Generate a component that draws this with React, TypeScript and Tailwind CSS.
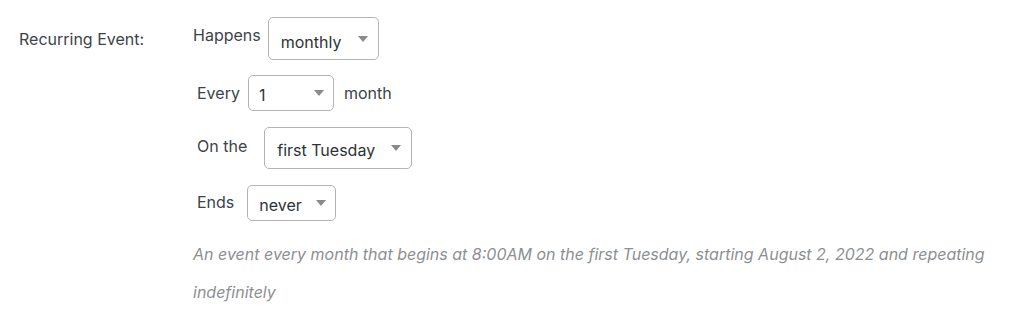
import React from "react";

function Arrow() {
  return (
    <svg width="10" height="6" viewBox="0 0 10 6" className="shrink-0">
      <path d="M0 0 L10 0 L5 6 Z" fill="#8a8a8a" />
    </svg>
  );
}

export default function App() {
  return (
    <div
      className="min-h-[314px] w-[1024px] bg-white"
      style={{ fontFamily: "Inter, 'Noto Sans', sans-serif" }}
    >
      <div className="flex pt-[17px]">
        <div className="w-[193px] shrink-0 pl-[19px] pt-[10px] text-[16px] leading-[24px] text-[#3c434a]">
          Recurring Event:
        </div>
        <div className="flex flex-col">
          <div className="flex items-start">
            <span className="pt-[6px] text-[16px] leading-[24px] text-[#3c434a]">Happens</span>
            <div className="ml-[7px]">
              <div className="flex h-[43px] w-[111px] items-center justify-between rounded-[5px] border border-[#b4b4b4] bg-white pl-[12px] pr-[10px]">
                <span className="pt-[6px] text-[16px] text-[#2c3338]">monthly</span>
                <Arrow />
              </div>
            </div>
          </div>
          <div className="mt-[15px] flex items-center pl-[4px]">
            <span className="text-[16px] leading-[24px] text-[#3c434a]">Every</span>
            <div className="ml-[8px] flex h-[36px] w-[86px] items-center justify-between rounded-[5px] border border-[#b4b4b4] bg-white pl-[10px] pr-[9px]">
              <span className="pt-[3px] text-[16px] text-[#2c3338]">1</span>
              <Arrow />
            </div>
            <span className="ml-[10px] text-[16px] leading-[24px] text-[#3c434a]">month</span>
          </div>
          <div className="mt-[16px] flex items-center pl-[4px]">
            <span className="-mt-[5px] text-[16px] leading-[24px] text-[#3c434a]">On the</span>
            <div className="ml-[17px] flex h-[42px] w-[148px] items-center justify-between rounded-[5px] border border-[#b4b4b4] bg-white pl-[12px] pr-[10px]">
              <span className="pt-[4px] text-[16px] text-[#2c3338]">first Tuesday</span>
              <Arrow />
            </div>
          </div>
          <div className="mt-[16px] flex items-center pl-[4px]">
            <span className="-mt-[2px] text-[16px] leading-[24px] text-[#3c434a]">Ends</span>
            <div className="ml-[13px] flex h-[36px] w-[89px] items-center justify-between rounded-[5px] border border-[#b4b4b4] bg-white pl-[11px] pr-[9px]">
              <span className="pt-[3px] text-[16px] text-[#2c3338]">never</span>
              <Arrow />
            </div>
          </div>
          <p className="mt-[14px] w-[820px] text-[16px] italic leading-[38px] text-[#8c8f94]">
            An event every month that begins at 8:00AM on the first Tuesday, starting August 2, 2022 and repeating indefinitely
          </p>
        </div>
      </div>
    </div>
  );
}
